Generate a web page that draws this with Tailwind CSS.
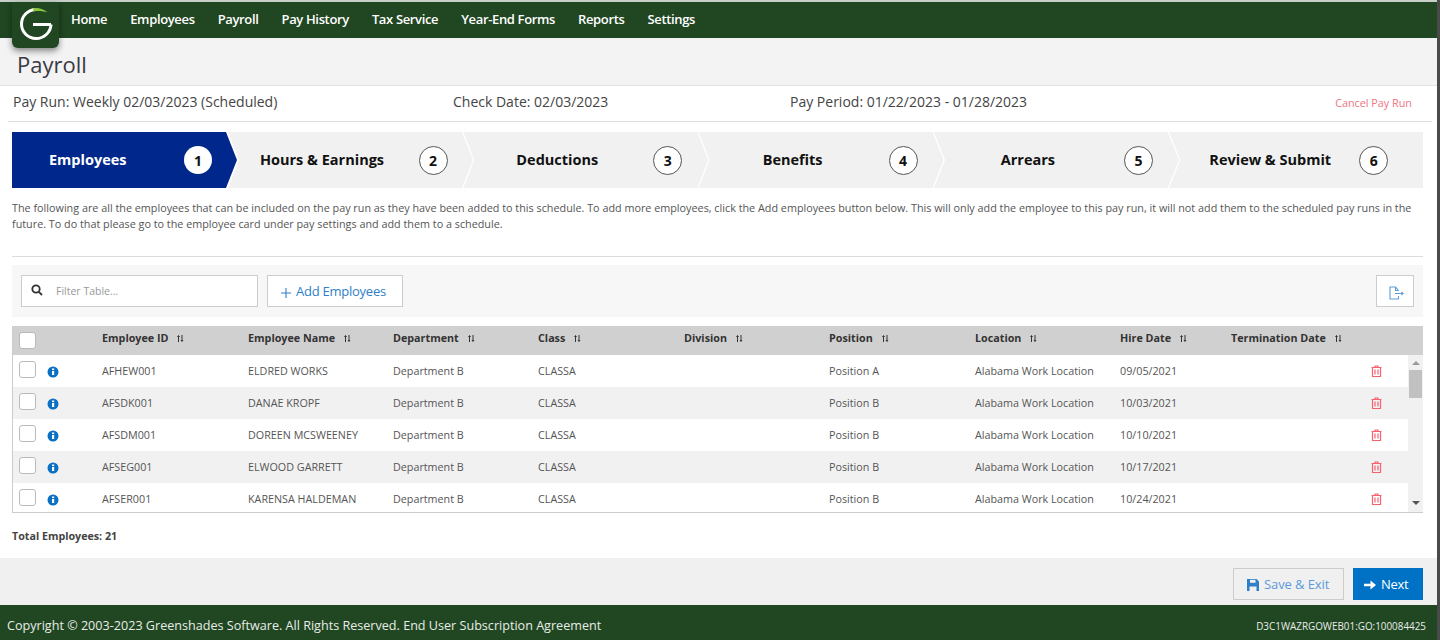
<!DOCTYPE html>
<html lang="en">
<head>
<meta charset="UTF-8">
<title>Payroll</title>
<script src="https://cdn.jsdelivr.net/npm/@tailwindcss/browser@4"></script>
</head>
<body class="w-[1440px] h-[640px] overflow-hidden bg-white font-['Open_Sans','Noto_Sans',sans-serif] text-[#444]">
<div class="h-[640px] flex flex-col relative">
  <!-- top nav -->
  <div class="h-[38px] shrink-0 bg-[#214722] border-t-2 border-[#c9cfc9] flex items-center pl-[71px] gap-[23px] text-[13px] font-semibold text-white tracking-[-0.35px]">
    <span>Home</span><span>Employees</span><span>Payroll</span><span>Pay History</span><span>Tax Service</span><span>Year-End Forms</span><span>Reports</span><span>Settings</span>
  </div>
  <div class="absolute left-[12px] top-[2px] w-[47px] h-[46px] rounded-b-[6px] bg-[#214722] shadow-[0_3px_6px_rgba(0,0,0,0.45)]">
    <svg class="absolute left-[6px] top-[4px]" width="36" height="36" viewBox="0 0 36 36" fill="none">
      <path d="M33 18.500H15M33 18.500C32.600 26.500 26 32.500 18 32.500C10 32.500 3.500 26 3.500 18C3.500 10 10 3.500 18 3.500" stroke="#fff" stroke-width="3"/>
      <path d="M15 2.200C20 1.200 25.500 2.600 29.500 6.500C25.500 5 20 4.600 15.500 5.400Z" fill="#8cc63f"/>
    </svg>
  </div>
  <!-- title -->
  <div class="h-[48px] shrink-0 bg-[#f3f3f3] border-b border-[#e2e2e2] pl-[17px] pt-[6px] flex items-center text-[22px] font-normal text-[#3a3a44]">Payroll</div>
  <!-- pay run info -->
  <div class="h-[36px] shrink-0 mx-[8px] border-b border-[#dcdcdc] relative text-[14px] text-[#444] flex items-center">
    <span class="w-[440px] pl-[5px] pb-[4px]">Pay Run: Weekly 02/03/2023 (Scheduled)</span>
    <span class="w-[337px] pl-[5px] pb-[4px]">Check Date: 02/03/2023</span>
    <span class="flex-1 pl-[5px] pb-[4px]">Pay Period: 01/22/2023 - 01/28/2023</span>
    <span class="pr-[20px] text-[10.8px] text-[#f0737f]">Cancel Pay Run</span>
  </div>
  <!-- steps -->
  <div class="mt-[10px] ml-[12px] w-[1411px] h-[56px] shrink-0 flex text-[14.5px] font-bold text-[#111]">
    <div class="w-[225px] shrink-0 bg-[#00288c] text-white flex items-center [clip-path:polygon(0_0,214px_0,225px_50%,214px_100%,0_100%)]">
      <span class="ml-[37px] w-[135px]">Employees</span>
      <span class="w-[28px] h-[28px] rounded-full bg-white text-[#111] text-[14px] flex items-center justify-center">1</span>
    </div>
    <div class="w-[245px] shrink-0 -ml-[9px] bg-[#f1f1f1] flex items-center [clip-path:polygon(0_0,234px_0,245px_50%,234px_100%,0_100%,11px_50%)]">
      <span class="w-[158px] ml-[15px] text-center whitespace-nowrap">Hours &amp; Earnings</span>
      <span class="ml-[17.500px] w-[29px] h-[29px] rounded-full bg-white border border-[#555] text-[14px] flex items-center justify-center">2</span>
    </div>
    <div class="w-[245px] shrink-0 -ml-[9.700px] bg-[#f1f1f1] flex items-center [clip-path:polygon(0_0,234px_0,245px_50%,234px_100%,0_100%,11px_50%)]">
      <span class="w-[158px] ml-[15px] text-center">Deductions</span>
      <span class="ml-[17px] w-[29px] h-[29px] rounded-full bg-white border border-[#555] text-[14px] flex items-center justify-center">3</span>
    </div>
    <div class="w-[245px] shrink-0 -ml-[9.700px] bg-[#f1f1f1] flex items-center [clip-path:polygon(0_0,234px_0,245px_50%,234px_100%,0_100%,11px_50%)]">
      <span class="w-[158px] ml-[15px] text-center">Benefits</span>
      <span class="ml-[17px] w-[29px] h-[29px] rounded-full bg-white border border-[#555] text-[14px] flex items-center justify-center">4</span>
    </div>
    <div class="w-[245px] shrink-0 -ml-[9.700px] bg-[#f1f1f1] flex items-center [clip-path:polygon(0_0,234px_0,245px_50%,234px_100%,0_100%,11px_50%)]">
      <span class="w-[158px] ml-[15px] text-center">Arrears</span>
      <span class="ml-[17px] w-[29px] h-[29px] rounded-full bg-white border border-[#555] text-[14px] flex items-center justify-center">5</span>
    </div>
    <div class="flex-1 -ml-[9.700px] bg-[#f1f1f1] flex items-center [clip-path:polygon(0_0,100%_0,100%_100%,0_100%,11px_50%)]">
      <span class="w-[158px] ml-[22px] text-center whitespace-nowrap">Review &amp; Submit</span>
      <span class="ml-[10px] w-[29px] h-[29px] rounded-full bg-white border border-[#555] text-[14px] flex items-center justify-center">6</span>
    </div>
  </div>
  <!-- description -->
  <div class="mt-[5px] mx-[12px] h-[64px] w-[1411px] shrink-0 border-b border-[#dcdcdc] pt-[7px] text-[10.8px] leading-[16px] text-[#555]">The following are all the employees that can be included on the pay run as they have been added to this schedule. To add more employees, click the Add employees button below. This will only add the employee to this pay run, it will not add them to the scheduled pay runs in the future. To do that please go to the employee card under pay settings and add them to a schedule.</div>
  <!-- toolbar -->
  <div class="mt-[8px] mx-[12px] w-[1411px] h-[52px] shrink-0 bg-[#f7f7f7] flex items-center pl-[9px] pr-[9px]">
    <div class="w-[237px] h-[32px] bg-white border border-[#ccc] flex items-center pl-[9px] text-[10.5px] text-[#999]">
      <svg class="w-[12px] h-[12px] mr-[13px] -mt-[3px]" viewBox="0 0 12 12" fill="none" stroke="#333" stroke-width="1.8"><circle cx="5" cy="5" r="3.7"/><path d="M7.800 7.800L11 11"/></svg>
      <span class="pt-[2px]">Filter Table...</span>
    </div>
    <div class="ml-[9px] w-[136px] h-[32px] bg-white border border-[#ccc] flex items-center pl-[13px] pt-[2px] text-[13px] tracking-[-0.25px] text-[#2f80c8]">
      <svg class="mr-[5px] mt-[1px]" width="10" height="10" viewBox="0 0 10 10" stroke="#2f80c8" stroke-width="1.100"><path d="M5 0V10M0 5H10"/></svg>Add Employees
    </div>
    <div class="ml-auto w-[38px] h-[32px] bg-white border border-[#ccc] flex items-center justify-center">
      <svg class="mt-[3px] ml-[2px]" width="15" height="14" viewBox="0 0 15 14" fill="none" stroke="#5b9bdc" stroke-width="1.100"><path d="M9.500 4.500L6.500 1H1V13H9.500V10"/><path d="M6.500 1V4.500H9.500"/><path d="M6 7.500H14M12.500 6L14 7.500L12.500 9"/></svg>
    </div>
  </div>
  <!-- table -->
  <div class="mt-[9px] mx-[12px] w-[1411px] h-[187px] shrink-0 border-b border-l border-[#ccc] text-[10.75px] text-[#555] relative">
    <div class="h-[29px] pb-[4px] bg-[#d0d0d0] font-bold text-[#333] grid grid-cols-[89px_146px_145px_145px_146px_145px_146px_145px_111px_1fr] items-center">
      <div class="pl-[6px] pt-[4px]"><span class="block w-[17px] h-[17px] rounded-[3px] bg-white border border-[#bbb]"></span></div>
      <div class="flex items-center">Employee ID<svg class="ml-[9px]" width="7" height="7" viewBox="0 0 7 7" fill="none" stroke="#333"><path d="M1.500 7V1M0.500 2L1.500 0.500L2.500 2M5 0V6M4 5L5 6.500L6 5"/></svg></div>
      <div class="flex items-center">Employee Name<svg class="ml-[9px]" width="7" height="7" viewBox="0 0 7 7" fill="none" stroke="#333"><path d="M1.500 7V1M0.500 2L1.500 0.500L2.500 2M5 0V6M4 5L5 6.500L6 5"/></svg></div>
      <div class="flex items-center">Department<svg class="ml-[9px]" width="7" height="7" viewBox="0 0 7 7" fill="none" stroke="#333"><path d="M1.500 7V1M0.500 2L1.500 0.500L2.500 2M5 0V6M4 5L5 6.500L6 5"/></svg></div>
      <div class="flex items-center">Class<svg class="ml-[9px]" width="7" height="7" viewBox="0 0 7 7" fill="none" stroke="#333"><path d="M1.500 7V1M0.500 2L1.500 0.500L2.500 2M5 0V6M4 5L5 6.500L6 5"/></svg></div>
      <div class="flex items-center">Division<svg class="ml-[9px]" width="7" height="7" viewBox="0 0 7 7" fill="none" stroke="#333"><path d="M1.500 7V1M0.500 2L1.500 0.500L2.500 2M5 0V6M4 5L5 6.500L6 5"/></svg></div>
      <div class="flex items-center">Position<svg class="ml-[9px]" width="7" height="7" viewBox="0 0 7 7" fill="none" stroke="#333"><path d="M1.500 7V1M0.500 2L1.500 0.500L2.500 2M5 0V6M4 5L5 6.500L6 5"/></svg></div>
      <div class="flex items-center">Location<svg class="ml-[9px]" width="7" height="7" viewBox="0 0 7 7" fill="none" stroke="#333"><path d="M1.500 7V1M0.500 2L1.500 0.500L2.500 2M5 0V6M4 5L5 6.500L6 5"/></svg></div>
      <div class="flex items-center">Hire Date<svg class="ml-[9px]" width="7" height="7" viewBox="0 0 7 7" fill="none" stroke="#333"><path d="M1.500 7V1M0.500 2L1.500 0.500L2.500 2M5 0V6M4 5L5 6.500L6 5"/></svg></div>
      <div class="flex items-center">Termination Date<svg class="ml-[9px]" width="7" height="7" viewBox="0 0 7 7" fill="none" stroke="#333"><path d="M1.500 7V1M0.500 2L1.500 0.500L2.500 2M5 0V6M4 5L5 6.500L6 5"/></svg></div>
    </div>
    <div class="h-[157px] overflow-hidden pr-[15px]">
      <div class="h-[32px] pt-[1px] bg-white grid grid-cols-[89px_146px_145px_145px_146px_145px_146px_145px_111px_1fr] items-center">
        <div class="pl-[6px] flex items-center"><span class="block -mt-[4px] w-[17px] h-[17px] rounded-[3px] bg-white border border-[#bbb]"></span><svg class="ml-[11px] w-[12px] h-[12px]" viewBox="0 0 12 12"><circle cx="6" cy="6" r="5.500" fill="#0a70c4"/><rect x="5" y="5" width="2.200" height="4" fill="#fff"/><rect x="5" y="2.500" width="2.200" height="1.600" fill="#fff"/></svg></div>
        <div>AFHEW001</div><div>ELDRED WORKS</div><div>Department B</div><div>CLASSA</div><div></div><div>Position A</div><div>Alabama Work Location</div><div>09/05/2021</div>
        <div class="flex justify-end pr-[26px] -mt-[2px]"><svg width="11" height="12" viewBox="0 0 11 12" fill="none" stroke="#f2636f" stroke-width="1.200"><path d="M0.500 2.500H10.500M4 2.500V1H7V2.500M1.500 2.500V11.500H9.500V2.500M4 4.500V9.500M7 4.500V9.500"/></svg></div>
      </div>
      <div class="h-[32px] pt-[1px] bg-[#f1f1f1] grid grid-cols-[89px_146px_145px_145px_146px_145px_146px_145px_111px_1fr] items-center">
        <div class="pl-[6px] flex items-center"><span class="block -mt-[4px] w-[17px] h-[17px] rounded-[3px] bg-white border border-[#bbb]"></span><svg class="ml-[11px] w-[12px] h-[12px]" viewBox="0 0 12 12"><circle cx="6" cy="6" r="5.500" fill="#0a70c4"/><rect x="5" y="5" width="2.200" height="4" fill="#fff"/><rect x="5" y="2.500" width="2.200" height="1.600" fill="#fff"/></svg></div>
        <div>AFSDK001</div><div>DANAE KROPF</div><div>Department B</div><div>CLASSA</div><div></div><div>Position B</div><div>Alabama Work Location</div><div>10/03/2021</div>
        <div class="flex justify-end pr-[26px] -mt-[2px]"><svg width="11" height="12" viewBox="0 0 11 12" fill="none" stroke="#f2636f" stroke-width="1.200"><path d="M0.500 2.500H10.500M4 2.500V1H7V2.500M1.500 2.500V11.500H9.500V2.500M4 4.500V9.500M7 4.500V9.500"/></svg></div>
      </div>
      <div class="h-[32px] pt-[1px] bg-white grid grid-cols-[89px_146px_145px_145px_146px_145px_146px_145px_111px_1fr] items-center">
        <div class="pl-[6px] flex items-center"><span class="block -mt-[4px] w-[17px] h-[17px] rounded-[3px] bg-white border border-[#bbb]"></span><svg class="ml-[11px] w-[12px] h-[12px]" viewBox="0 0 12 12"><circle cx="6" cy="6" r="5.500" fill="#0a70c4"/><rect x="5" y="5" width="2.200" height="4" fill="#fff"/><rect x="5" y="2.500" width="2.200" height="1.600" fill="#fff"/></svg></div>
        <div>AFSDM001</div><div>DOREEN MCSWEENEY</div><div>Department B</div><div>CLASSA</div><div></div><div>Position B</div><div>Alabama Work Location</div><div>10/10/2021</div>
        <div class="flex justify-end pr-[26px] -mt-[2px]"><svg width="11" height="12" viewBox="0 0 11 12" fill="none" stroke="#f2636f" stroke-width="1.200"><path d="M0.500 2.500H10.500M4 2.500V1H7V2.500M1.500 2.500V11.500H9.500V2.500M4 4.500V9.500M7 4.500V9.500"/></svg></div>
      </div>
      <div class="h-[32px] pt-[1px] bg-[#f1f1f1] grid grid-cols-[89px_146px_145px_145px_146px_145px_146px_145px_111px_1fr] items-center">
        <div class="pl-[6px] flex items-center"><span class="block -mt-[4px] w-[17px] h-[17px] rounded-[3px] bg-white border border-[#bbb]"></span><svg class="ml-[11px] w-[12px] h-[12px]" viewBox="0 0 12 12"><circle cx="6" cy="6" r="5.500" fill="#0a70c4"/><rect x="5" y="5" width="2.200" height="4" fill="#fff"/><rect x="5" y="2.500" width="2.200" height="1.600" fill="#fff"/></svg></div>
        <div>AFSEG001</div><div>ELWOOD GARRETT</div><div>Department B</div><div>CLASSA</div><div></div><div>Position B</div><div>Alabama Work Location</div><div>10/17/2021</div>
        <div class="flex justify-end pr-[26px] -mt-[2px]"><svg width="11" height="12" viewBox="0 0 11 12" fill="none" stroke="#f2636f" stroke-width="1.200"><path d="M0.500 2.500H10.500M4 2.500V1H7V2.500M1.500 2.500V11.500H9.500V2.500M4 4.500V9.500M7 4.500V9.500"/></svg></div>
      </div>
      <div class="h-[32px] pt-[1px] bg-white grid grid-cols-[89px_146px_145px_145px_146px_145px_146px_145px_111px_1fr] items-center">
        <div class="pl-[6px] flex items-center"><span class="block -mt-[4px] w-[17px] h-[17px] rounded-[3px] bg-white border border-[#bbb]"></span><svg class="ml-[11px] w-[12px] h-[12px]" viewBox="0 0 12 12"><circle cx="6" cy="6" r="5.500" fill="#0a70c4"/><rect x="5" y="5" width="2.200" height="4" fill="#fff"/><rect x="5" y="2.500" width="2.200" height="1.600" fill="#fff"/></svg></div>
        <div>AFSER001</div><div>KARENSA HALDEMAN</div><div>Department B</div><div>CLASSA</div><div></div><div>Position B</div><div>Alabama Work Location</div><div>10/24/2021</div>
        <div class="flex justify-end pr-[26px] -mt-[2px]"><svg width="11" height="12" viewBox="0 0 11 12" fill="none" stroke="#f2636f" stroke-width="1.200"><path d="M0.500 2.500H10.500M4 2.500V1H7V2.500M1.500 2.500V11.500H9.500V2.500M4 4.500V9.500M7 4.500V9.500"/></svg></div>
      </div>
    </div>
    <!-- scrollbar -->
    <div class="absolute right-0 top-[29px] bottom-0 w-[15px] bg-[#f1f1f1] flex flex-col items-center">
      <span class="mt-[6px] w-0 h-0 border-x-[4px] border-x-transparent border-b-[4px] border-b-[#999]"></span>
      <span class="mt-[5px] w-[13px] h-[28px] bg-[#c1c1c1]"></span>
      <span class="mt-auto mb-[7px] w-0 h-0 border-x-[4px] border-x-transparent border-t-[4px] border-t-[#555]"></span>
    </div>
  </div>
  <div class="mt-[15px] ml-[12px] shrink-0 text-[10.7px] font-bold text-[#444]">Total Employees: 21</div>
  <div class="flex-1"></div>
  <!-- actions -->
  <div class="h-[47px] shrink-0 bg-[#f0f0f0] flex items-start justify-end pt-[10px] pr-[17px] gap-[9px] text-[13px]">
    <div class="w-[111px] h-[32px] border border-[#ccc] text-[#5b9bdc] flex items-center pl-[13px] pt-[2px] tracking-[-0.1px]">
      <svg class="mr-[5px] -mt-[1px]" width="12" height="12" viewBox="0 0 12 12"><path d="M0 0H9.500L12 2.500V12H0Z" fill="#2f7fc8"/><rect x="3" y="0.800" width="5.500" height="3" fill="#f0f0f0"/><rect x="2.500" y="7.500" width="7" height="4.500" fill="#f0f0f0"/></svg>Save &amp; Exit
    </div>
    <div class="w-[70px] h-[32px] bg-[#0072c6] text-white flex items-center pl-[11px] pt-[2px] tracking-[-0.3px]">
      <svg class="mr-[5px] -mt-[1px]" width="12" height="10" viewBox="0 0 12 10"><path d="M0 3.700H6.500V0.500L12 5L6.500 9.500V6.300H0Z" fill="#fff"/></svg>Next
    </div>
  </div>
  <!-- footer -->
  <div class="h-[35px] shrink-0 bg-[#214722] flex items-center justify-between pl-[7px] pr-[14px] pt-[7px] text-[12.6px] text-[#e8ece8]">
    <span>Copyright © 2003-2023 Greenshades Software. All Rights Reserved. End User Subscription Agreement</span>
    <span class="text-[9.9px]">D3C1WAZRGOWEB01:GO:100084425</span>
  </div>
  <!-- window edge -->
  <div class="absolute right-0 top-0 bottom-0 w-[3px] bg-[#4a4a4a]"></div>
</div>
</body>
</html>
